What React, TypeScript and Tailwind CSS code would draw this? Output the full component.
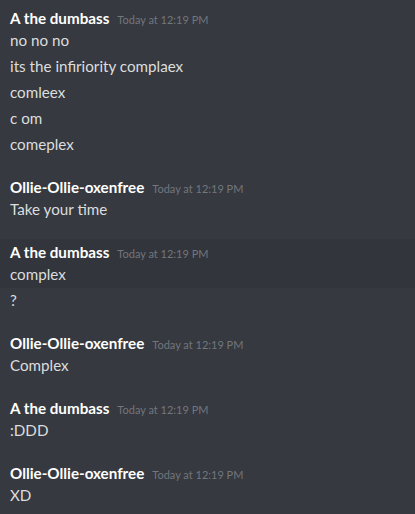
const font = { fontFamily: "Lato, 'Noto Sans', sans-serif" };

type Group = { name: string; lines: string[]; hover?: boolean };

const groups: Group[] = [
  {
    name: "A the dumbass",
    lines: ["no no no", "its the infiriority complaex", "comleex", "c om", "comeplex"],
  },
  { name: "Ollie-Ollie-oxenfree", lines: ["Take your time"] },
  { name: "A the dumbass", lines: ["complex", "?"], hover: true },
  { name: "Ollie-Ollie-oxenfree", lines: ["Complex"] },
  { name: "A the dumbass", lines: [":DDD"] },
  { name: "Ollie-Ollie-oxenfree", lines: ["XD"] },
];

function MessageGroup({ g }: { g: Group }) {
  const [first, ...rest] = g.lines;
  return (
    <div className="mt-[19px] first:mt-0">
      <div className={`-mb-[3px] px-[10px] pt-[2px] pb-[3px] ${g.hover ? "bg-[#32353b]" : ""}`}>
        <div className="text-[15.2px] leading-[22px]">
          <span className="font-bold text-white">{g.name}</span>
          <span className="ml-[8px] text-[11px] leading-none text-[#72767d]">Today at 12:19 PM</span>
        </div>
        <div className="text-[15.2px] leading-[22px] text-[#dcddde]">{first}</div>
      </div>
      {rest.map((line, i) => (
        <div key={i} className="mt-[4px] px-[10px] text-[15.2px] leading-[22px] text-[#dcddde]">
          {line}
        </div>
      ))}
    </div>
  );
}

export default function App() {
  return (
    <div className="h-[514px] w-[415px] overflow-hidden bg-[#36393f] pt-[5px]" style={font}>
      {groups.map((g, i) => (
        <MessageGroup key={i} g={g} />
      ))}
    </div>
  );
}
